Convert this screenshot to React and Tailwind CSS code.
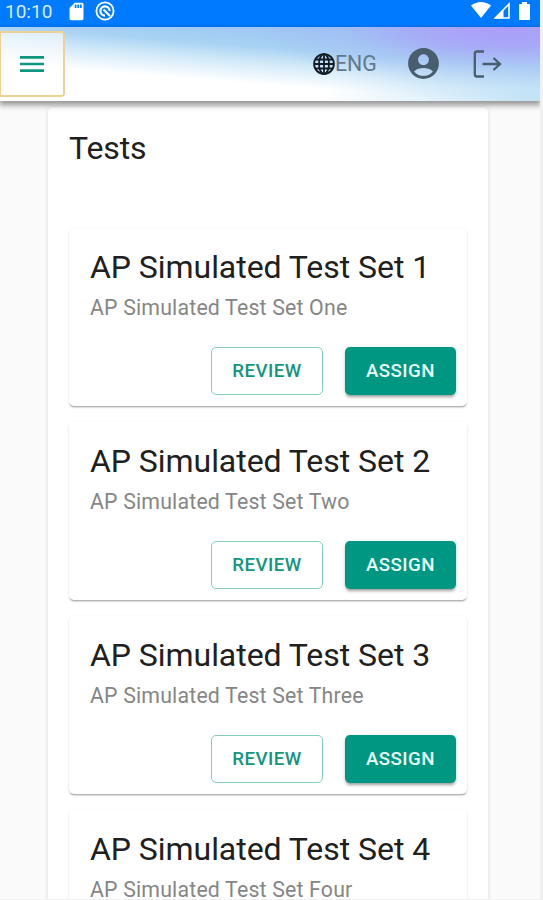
import { MdAccountCircle, MdMenu, MdSdCard } from 'react-icons/md'

const TESTS = [
  { id: 1, title: 'AP Simulated Test Set 1', subtitle: 'AP Simulated Test Set One' },
  { id: 2, title: 'AP Simulated Test Set 2', subtitle: 'AP Simulated Test Set Two' },
  { id: 3, title: 'AP Simulated Test Set 3', subtitle: 'AP Simulated Test Set Three' },
  { id: 4, title: 'AP Simulated Test Set 4', subtitle: 'AP Simulated Test Set Four' },
]

function StatusBar() {
  return (
    <div className="flex h-[27px] shrink-0 items-start bg-[#007bff] pl-[5px] pr-[10px] text-white">
      <span className="w-[62px] text-[19px] leading-[24px] text-[#d9ebff]">10:10</span>
      <MdSdCard size={21} className="mt-px -ml-px" />
      <svg width="20" height="20" viewBox="0 0 20 20" fill="none" stroke="currentColor" className="mt-[1px] ml-[8px]">
        <circle cx="10" cy="10" r="8.6" strokeWidth="1.8" />
        <path d="M10 14.600A4.600 4.600 0 1 1 14.600 10" strokeWidth="2.200" />
        <path d="M8.500 8.500l6.500 6.500" strokeWidth="2.200" />
      </svg>
      <div className="ml-auto flex items-start">
        <svg width="20" height="16" viewBox="0 0 20 16" fill="currentColor" className="mt-[2px]">
          <path d="M10 16L0 3.600C3 1.200 6.400 0 10 0s7 1.200 10 3.600z" />
        </svg>
        <svg width="17" height="17" viewBox="0 0 17 17" fill="none" stroke="currentColor" className="mt-[2px] ml-[2px]">
          <path d="M2.500 16H16V2z" strokeWidth="1.600" />
          <path d="M1 16.500L10.500 7v9.500z" fill="currentColor" stroke="none" />
        </svg>
        <svg width="11" height="18" viewBox="0 0 11 18" fill="currentColor" className="mt-[2px] ml-[9px]">
          <path d="M3 0h5v2h2.300q.7 0 .7.700v14.600q0 .7-.7.700H.7q-.7 0-.7-.7V2.700Q0 2 .7 2H3z" />
        </svg>
      </div>
    </div>
  )
}

function Header() {
  return (
    <header className="relative z-10 flex h-[74px] shrink-0 items-center bg-white bg-[radial-gradient(ellipse_260px_62px_at_510px_0px,#ac9cfa_0%,#ac9ef9b0_35%,#a8b4f650_65%,#a8b4f600_100%),radial-gradient(ellipse_220px_60px_at_540px_74px,#b5dcf4cc_0%,#c5e4f600_100%),linear-gradient(184.500deg,#9cc5f4_16%,#a8d3f3_36%,#d3eaf9_50%,#ffffff_68%)] shadow-[0_3px_6px_1px_rgba(0,0,0,0.42)]">
      <button className="flex h-[66px] w-[65px] items-center justify-center rounded-r-[4px] border-2 border-l border-[#edd196] bg-white/60 text-[#0f9580]">
        <MdMenu size={32} />
      </button>
      <div className="ml-auto flex items-center pr-[38px] text-[#485e6f]">
        <svg width="22" height="22" viewBox="0 0 22 22" fill="none" stroke="#111c24" strokeWidth="1.800">
          <circle cx="11" cy="11" r="9.900" />
          <ellipse cx="11" cy="11" rx="5" ry="9.900" />
          <path d="M11 1v20M1 11h20M2.500 6.500h17M2.500 15.500h17" />
        </svg>
        <span className="w-[70px] text-[21.300px] leading-[28px] text-[#60798b]">ENG</span>
        <MdAccountCircle size={37} className="-mt-px" />
        <svg width="29" height="28" viewBox="0 0 29 28" fill="none" stroke="currentColor" strokeWidth="2.300" className="ml-[31px]">
          <path d="M11 1.500H4Q1.800 1.500 1.800 3.700v20.600Q1.800 26.500 4 26.500h7" />
          <path d="M9.500 14h17M20.500 8l6.500 6-6.500 6" />
        </svg>
      </div>
    </header>
  )
}

function TestCard({ test }) {
  return (
    <div className="h-[178px] shrink-0 rounded-[5px] bg-white pl-[21px] pr-[11px] pt-[19px] shadow-[0_2px_2px_-1px_rgba(0,0,0,0.34),0_1px_3px_0_rgba(0,0,0,0.1)]">
      <h2 className="text-[32px] leading-[40px] tracking-[-0.050px] whitespace-nowrap text-[#202020]">{test.title}</h2>
      <p className="mt-[7px] text-[21.300px] leading-[28px] tracking-[0.180px] whitespace-nowrap text-[#868686]">{test.subtitle}</p>
      <div className="mt-[25px] flex justify-end gap-[22px] text-[18.700px] font-medium tracking-[0.450px]">
        <button className="h-[48px] w-[112px] rounded-[5px] border border-[#85cdbd] text-[#14957f]">REVIEW</button>
        <button className="h-[48px] w-[111px] rounded-[5px] bg-[#009782] text-[#e9fbf7] shadow-[0_3px_3px_-1px_rgba(0,0,0,0.3),0_1px_4px_rgba(0,0,0,0.15)]">
          ASSIGN
        </button>
      </div>
    </div>
  )
}

export default function App() {
  return (
    <div className="h-[900px] w-[543px] overflow-hidden bg-[#f0f0f0] font-['Roboto',sans-serif]">
      <div className="flex h-[899px] w-[540px] flex-col overflow-hidden bg-[#fafafa]">
        <StatusBar />
        <Header />
        <main className="mt-[6px] ml-[48px] flex w-[440px] flex-1 flex-col rounded-t-[5px] bg-white px-[21px] pt-[21px] shadow-[0_1px_4px_rgba(0,0,0,0.14)]">
          <h1 className="text-[32px] leading-[40px] tracking-[-0.100px] text-[#202020]">Tests</h1>
          <div className="mt-[60px] flex h-0 flex-col gap-4">
            {TESTS.map(test => (
              <TestCard key={test.id} test={test} />
            ))}
          </div>
        </main>
      </div>
    </div>
  )
}
